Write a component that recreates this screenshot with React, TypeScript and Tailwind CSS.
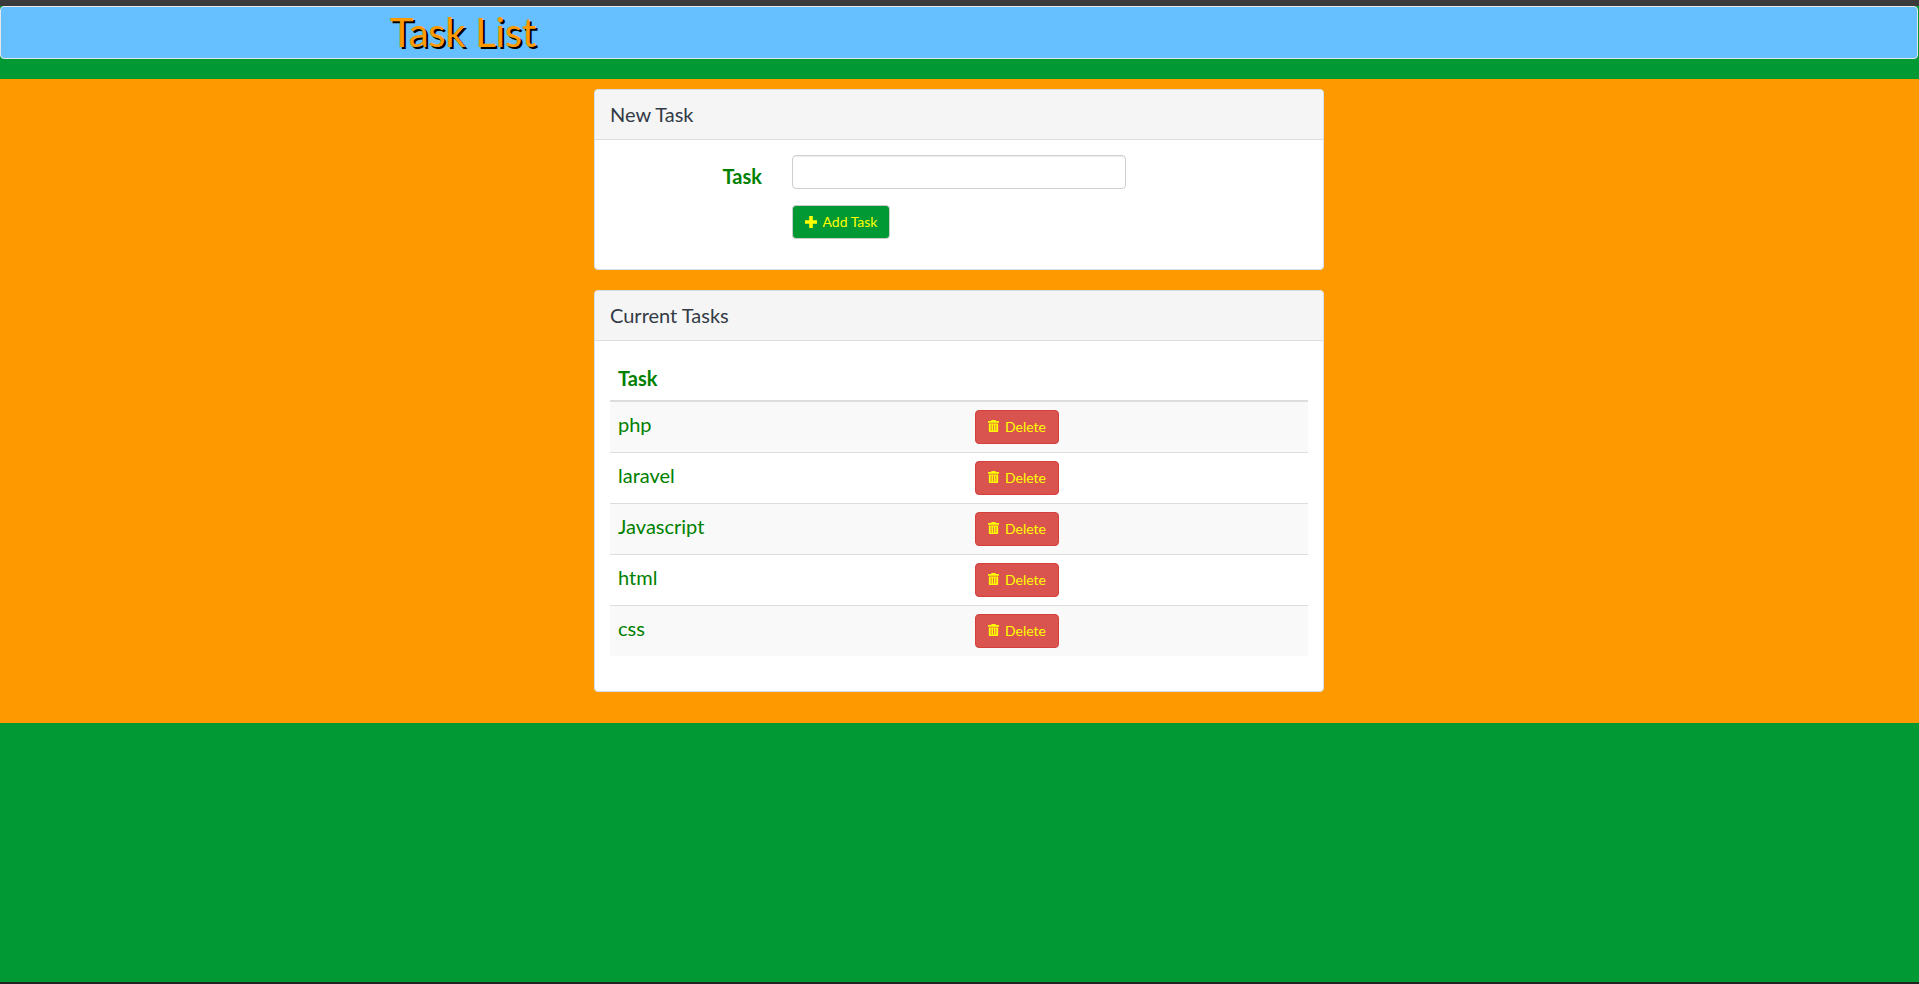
import React from 'react';

const tasks = ['php', 'laravel', 'Javascript', 'html', 'css'];

const PlusIcon = () => (
  <svg viewBox="1 1 10 10" className="w-[12px] h-[12px] shrink-0" fill="#ffff00">
    <path d="M4.5 1h3v3.5H11v3H7.5V11h-3V7.5H1v-3h3.5z" />
  </svg>
);

const TrashIcon = () => (
  <svg viewBox="0.8 0.6 10.4 13.3" preserveAspectRatio="none" className="w-[11px] h-[12px] shrink-0" fill="#ffff00">
    <path fillRule="evenodd" d="M4.2 0.6h3.6l0.5 1.2H11.2v1.8H0.8V1.8h2.9zM1.6 4.4h8.8V13a0.9 0.9 0 0 1-0.9 0.9H2.5a0.9 0.9 0 0 1-0.9-0.9zM3.4 5.6v6.8h0.7V5.6zM5.65 5.6v6.8h0.7V5.6zM7.9 5.6v6.8h0.7V5.6z" />
  </svg>
);

const Panel: React.FC<{ title: string; children: React.ReactNode }> = ({ title, children }) => (
  <div className="bg-white border border-[#d3e0e9] rounded-[4px] overflow-hidden">
    <div className="h-[50px] px-[15px] pb-[2px] flex items-center bg-[#f5f5f5] border-b border-[#dddddd] text-[20px] text-[#333a45]">
      {title}
    </div>
    <div className="p-[15px]">{children}</div>
  </div>
);

export default function App() {
  return (
    <div className="h-[984px] overflow-hidden flex flex-col bg-[#009933] font-['Lato',sans-serif]">
      <div className="h-[6px] bg-[#3a3a3a] shrink-0" />
      <nav className="h-[53px] shrink-0 bg-[#66bfff] border border-[#e7e7e7] rounded-[4px] mr-[1px] pl-[389px] pb-[2px] flex items-center">
        <h1 className="text-[40px] leading-none tracking-[-0.3px] text-[#ff9900] [text-shadow:2px_2px_0_#000]">Task List</h1>
      </nav>
      <div className="mt-[20px] bg-[#ff9900] pt-[10px] pb-[31px] pr-[1px] flex justify-center">
        <div className="w-[730px] flex flex-col gap-[20px]">
          <Panel title="New Task">
            <form className="flex flex-col gap-[16px] pb-[15px]">
              <div className="flex items-start">
                <label className="w-[152px] h-[34px] text-right pt-[7px] text-[20px] leading-[28px] font-bold text-[#008000]">Task</label>
                <input type="text" className="ml-[30px] w-[334px] h-[34px] bg-white border border-[#ccd0d2] rounded-[4px] shadow-[inset_0_1px_1px_rgba(0,0,0,0.075)]" />
              </div>
              <div className="pl-[182px]">
                <button type="button" className="h-[34px] w-[98px] pb-[1px] flex items-center justify-center gap-[6px] bg-[#009933] border border-[#cccccc] rounded-[4px] text-[14px] text-[#ffff00]">
                  <PlusIcon />
                  Add Task
                </button>
              </div>
            </form>
          </Panel>
          <Panel title="Current Tasks">
            <table className="w-full mb-[20px] border-collapse text-[20px] text-[#008000]">
              <thead>
                <tr className="border-b-2 border-[#dddddd]">
                  <th className="p-[8px] leading-[28px] font-bold text-left">Task</th>
                  <th className="p-[8px]" />
                </tr>
              </thead>
              <tbody>
                {tasks.map((t, i) => (
                  <tr key={t} className={`${i % 2 === 0 ? 'bg-[#f9f9f9]' : 'bg-white'} ${i > 0 ? 'border-t border-[#dddddd]' : ''}`}>
                    <td className="w-[357px] p-[8px] align-top leading-[29px]">{t}</td>
                    <td className="p-[8px] align-top">
                      <button type="button" className="h-[34px] w-[84px] pb-[2px] flex items-center justify-center gap-[6px] bg-[#d9534f] border border-[#d43f3a] rounded-[4px] text-[14px] text-[#ffff00]">
                        <TrashIcon />
                        Delete
                      </button>
                    </td>
                  </tr>
                ))}
              </tbody>
            </table>
          </Panel>
        </div>
      </div>
      <div className="flex-1" />
      <div className="h-[2px] bg-[#222222] shrink-0" />
    </div>
  );
}
